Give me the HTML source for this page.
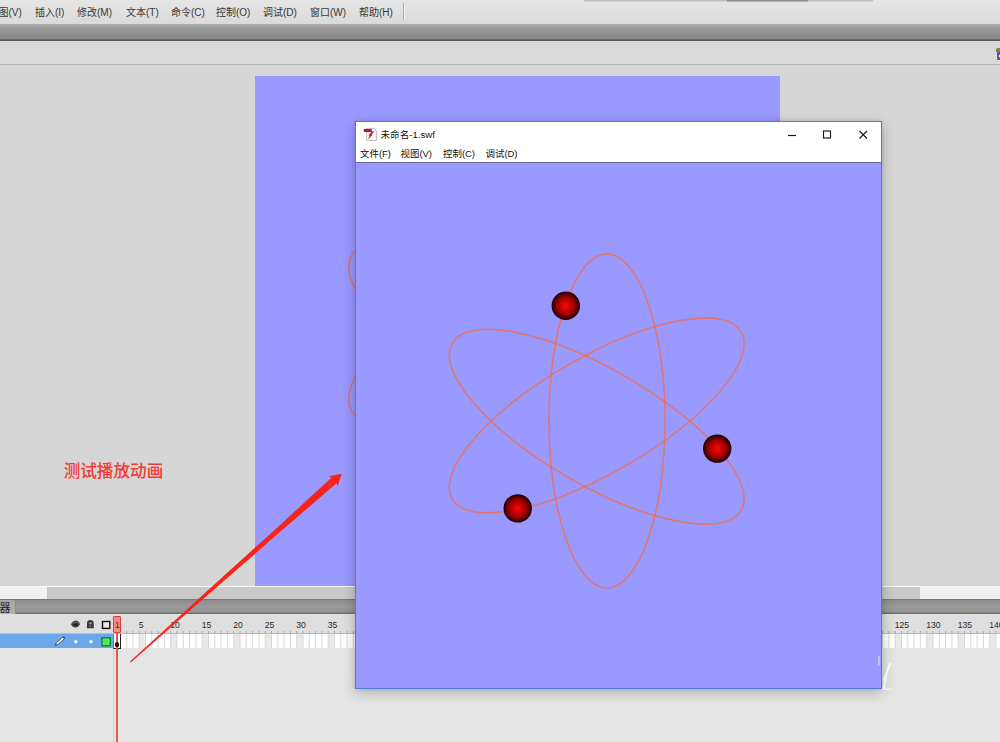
<!DOCTYPE html>
<html lang="zh"><head><meta charset="utf-8"><title>Flash</title>
<style>
html,body{margin:0;padding:0}
body{width:1000px;height:742px;position:relative;overflow:hidden;background:#d6d6d6;font-family:"Liberation Sans","Noto Sans CJK SC",sans-serif;color:#222}
div,span,svg{position:absolute;box-sizing:border-box}
#menubar{left:0;top:0;width:1000px;height:24px;background:linear-gradient(#e6e6e6,#dadada)}
#menubar span{top:6px;font-size:10px;line-height:14px;white-space:nowrap;color:#363636}
#darkbar{left:0;top:24px;width:1000px;height:17px;background:linear-gradient(#b0b0b0 0,#9a9a9a 25%,#8e8e8e 60%,#888888 86%,#5e5e5e 94%,#555555);}
#toolbar{left:0;top:41px;width:1000px;height:24px;background:#dadada;border-bottom:1px solid #b6b6b6}
#work{left:0;top:65px;width:1000px;height:522px;background:#d6d6d6}
#stage{left:255px;top:76px;width:525px;height:511px;background:#9999ff;overflow:hidden}
#hscroll{left:0;top:586px;width:1000px;height:13px;background:#f0f0f0;border-top:1px solid #f6f6f6}
#hthumb{left:47px;top:0;width:873px;height:11.5px;background:#c9c9c9}
#tlbar{left:0;top:599px;width:1000px;height:15px;background:linear-gradient(#6c6c6c 0,#8e8e8e 10%,#9b9b9b 50%,#929292 86%,#707070 96%,#6c6c6c);}
#tltab{left:0;top:1px;width:16px;height:14px;background:linear-gradient(#a4a4a4,#b4b4b4);border-right:1px solid #8a8a8a;font-size:10px;line-height:14px;overflow:hidden;color:#222}
#tlhead{left:0;top:614px;width:1000px;height:20px;background:#dedede;border-bottom:1px solid #bdbdbd}
#tlhead .num span{top:5.5px;font-size:8.6px;line-height:11px;color:#2a2a2a}
#ticks{left:120.3px;top:17px;width:880px;height:2px;background:repeating-linear-gradient(90deg,#9a9a9a 0,#9a9a9a 0.9px,transparent 0.9px,transparent 6.3px)}
#layer{left:0;top:634px;width:113.5px;height:14px;background:#6aa8ea}
#frames{left:114px;top:634px;width:886px;height:14.5px;background:
 repeating-linear-gradient(90deg,#ffffff 0,#ffffff 25.2px,#e9e9e9 25.2px,#e9e9e9 31.5px);border-bottom:1px solid #d0d0d0}
#below{left:0;top:648px;width:1000px;height:94px;background:#e5e5e5}
#vline{left:113px;top:648px;width:1px;height:94px;background:#cfcfcf}
#ph{left:113.3px;top:616.4px;width:7.6px;height:16.2px;background:#f28c8c;border:1px solid #e03c3c;border-radius:1px}
#phline{left:115.7px;top:633px;width:2.6px;height:109px;background:#f2a4a4;border-left:0.8px solid #de5656;border-right:0.8px solid #de5656}
#kf{left:113.3px;top:634px;width:7.5px;height:15px;border:1px solid #222;border-top:0;border-left-color:#777;background:#fff}
#win{left:355px;top:121px;width:527px;height:568px;background:#9999ff;border:1px solid #4f7cd4;box-shadow:0 4px 13px 0 rgba(0,0,0,.24),0 0 3px rgba(0,0,0,.10)}
#wtitle{left:0;top:0;width:525px;height:22px;background:#fff}
#wmenu{left:0;top:22px;width:525px;height:19px;background:#fff;border-bottom:1px solid #6c6ca8}
#wmenu span{top:3.1px;font-size:9.45px;line-height:14px;color:#111;white-space:nowrap}
#wtitle .t{left:24.5px;top:5.9px;font-size:9.6px;line-height:14px;color:#111;white-space:nowrap}
#red{left:63.7px;top:460.8px;font-size:16.6px;line-height:22px;color:#f23a34;white-space:nowrap;font-weight:500}
</style></head><body>
<div id="menubar">
<span style="left:-1.5px">图(V)</span><span style="left:35px">插入(I)</span><span style="left:77px">修改(M)</span><span style="left:126px">文本(T)</span><span style="left:171px">命令(C)</span><span style="left:216px">控制(O)</span><span style="left:263px">调试(D)</span><span style="left:310px">窗口(W)</span><span style="left:359px">帮助(H)</span>
<div style="left:403px;top:3px;width:1px;height:17px;background:#a8a8a8"></div><div style="left:404px;top:3px;width:1px;height:17px;background:#f2f2f2"></div>
</div>
<div style="left:584px;top:0;width:289px;height:2px;background:linear-gradient(rgba(164,164,164,.8),rgba(190,190,190,.2))"></div>
<div style="left:727px;top:0;width:81px;height:2px;background:linear-gradient(rgba(110,110,110,.8),rgba(150,150,150,.3))"></div>
<div id="darkbar"></div>
<div id="toolbar"></div>
<div id="work"></div>
<div style="left:996.4px;top:48.4px;width:4px;height:4px;background:#7c8a34;border-radius:2px 0 0 0"></div>
<div style="left:996.8px;top:52px;width:4px;height:7.6px;background:#5c5ca4"></div>
<div style="left:999px;top:54.5px;width:1px;height:2px;background:#f0f0ff"></div>

<div id="stage">
<svg width="525" height="511" viewBox="255 76 525 511" style="left:0;top:0">
<g transform="translate(-100.5 -88)" fill="none" stroke="#fa6840" stroke-opacity="0.76" stroke-width="1.5">
<ellipse cx="607" cy="421" rx="58" ry="167"/>
<ellipse cx="596.7" cy="426.8" rx="167" ry="58" transform="rotate(30 596.7 426.8)"/>
<ellipse cx="596.7" cy="415.4" rx="167" ry="58" transform="rotate(-30 596.7 415.4)"/>
</g></svg>
</div>
<div id="red">测试播放动画</div>
<div id="hscroll"><div id="hthumb"></div></div>
<div id="tlbar"><div id="tltab"><span style="left:-0.5px;top:0.9px;font-size:11px">器</span></div></div>
<div id="tlhead"><div class="num" style="left:0;top:0"><span style="left:138.7px">5</span><span style="left:170.2px">10</span><span style="left:201.7px">15</span><span style="left:233.2px">20</span><span style="left:264.7px">25</span><span style="left:296.2px">30</span><span style="left:327.7px">35</span><span style="left:359.2px">40</span><span style="left:390.7px">45</span><span style="left:422.2px">50</span><span style="left:453.7px">55</span><span style="left:485.2px">60</span><span style="left:516.7px">65</span><span style="left:548.2px">70</span><span style="left:579.7px">75</span><span style="left:611.2px">80</span><span style="left:642.7px">85</span><span style="left:674.2px">90</span><span style="left:705.7px">95</span><span style="left:737.2px">100</span><span style="left:768.7px">105</span><span style="left:800.2px">110</span><span style="left:831.7px">115</span><span style="left:863.2px">120</span><span style="left:894.7px">125</span><span style="left:926.2px">130</span><span style="left:957.7px">135</span><span style="left:989.2px">140</span></div><svg width="1000" height="36" viewBox="0 614 1000 36" style="left:0;top:0"><path d="M120.3 631v2.6M126.6 631v2.6M132.9 631v2.6M139.2 631v2.6M145.5 631v2.6M151.8 631v2.6M158.1 631v2.6M164.4 631v2.6M170.7 631v2.6M177.0 631v2.6M183.3 631v2.6M189.6 631v2.6M195.9 631v2.6M202.2 631v2.6M208.5 631v2.6M214.8 631v2.6M221.1 631v2.6M227.4 631v2.6M233.7 631v2.6M240.0 631v2.6M246.3 631v2.6M252.6 631v2.6M258.9 631v2.6M265.2 631v2.6M271.5 631v2.6M277.8 631v2.6M284.1 631v2.6M290.4 631v2.6M296.7 631v2.6M303.0 631v2.6M309.3 631v2.6M315.6 631v2.6M321.9 631v2.6M328.2 631v2.6M334.5 631v2.6M340.8 631v2.6M347.1 631v2.6M353.4 631v2.6M359.7 631v2.6M366.0 631v2.6M372.3 631v2.6M378.6 631v2.6M384.9 631v2.6M391.2 631v2.6M397.5 631v2.6M403.8 631v2.6M410.1 631v2.6M416.4 631v2.6M422.7 631v2.6M429.0 631v2.6M435.3 631v2.6M441.6 631v2.6M447.9 631v2.6M454.2 631v2.6M460.5 631v2.6M466.8 631v2.6M473.1 631v2.6M479.4 631v2.6M485.7 631v2.6M492.0 631v2.6M498.3 631v2.6M504.6 631v2.6M510.9 631v2.6M517.2 631v2.6M523.5 631v2.6M529.8 631v2.6M536.1 631v2.6M542.4 631v2.6M548.7 631v2.6M555.0 631v2.6M561.3 631v2.6M567.6 631v2.6M573.9 631v2.6M580.2 631v2.6M586.5 631v2.6M592.8 631v2.6M599.1 631v2.6M605.4 631v2.6M611.7 631v2.6M618.0 631v2.6M624.3 631v2.6M630.6 631v2.6M636.9 631v2.6M643.2 631v2.6M649.5 631v2.6M655.8 631v2.6M662.1 631v2.6M668.4 631v2.6M674.7 631v2.6M681.0 631v2.6M687.3 631v2.6M693.6 631v2.6M699.9 631v2.6M706.2 631v2.6M712.5 631v2.6M718.8 631v2.6M725.1 631v2.6M731.4 631v2.6M737.7 631v2.6M744.0 631v2.6M750.3 631v2.6M756.6 631v2.6M762.9 631v2.6M769.2 631v2.6M775.5 631v2.6M781.8 631v2.6M788.1 631v2.6M794.4 631v2.6M800.7 631v2.6M807.0 631v2.6M813.3 631v2.6M819.6 631v2.6M825.9 631v2.6M832.2 631v2.6M838.5 631v2.6M844.8 631v2.6M851.1 631v2.6M857.4 631v2.6M863.7 631v2.6M870.0 631v2.6M876.3 631v2.6M882.6 631v2.6M888.9 631v2.6M895.2 631v2.6M901.5 631v2.6M907.8 631v2.6M914.1 631v2.6M920.4 631v2.6M926.7 631v2.6M933.0 631v2.6M939.3 631v2.6M945.6 631v2.6M951.9 631v2.6M958.2 631v2.6M964.5 631v2.6M970.8 631v2.6M977.1 631v2.6M983.4 631v2.6M989.7 631v2.6M996.0 631v2.6M1002.3 631v2.6" stroke="#9c9c9c" stroke-width="0.9" fill="none"/></svg>
<svg width="50" height="20" viewBox="65 614 50 20" style="left:65px;top:0">
<!-- eye -->
<path d="M71 624.4 Q72.5 621 75.6 620.6 Q78.6 620.8 80 624 Q78.6 627.3 75.4 627.5 Q72.4 627.2 71 624.4Z" fill="#3a3a3a"/><path d="M72.6 623.2 Q75.5 621.3 78.6 623.2" stroke="#8a8a8a" stroke-width="0.7" fill="none"/><circle cx="75.6" cy="624.6" r="1.1" fill="#111"/>
<!-- lock -->
<path d="M86.9 628.3v-4.6a3.45 3.6 0 0 1 6.9 0v4.6z" fill="#3a3a3a"/><path d="M88.9 624.2v-0.6a1.45 1.5 0 0 1 2.9 0v0.6z" fill="#8c8c8c"/><rect x="89.6" y="625.2" width="1.5" height="1.8" fill="#777"/>
<!-- box -->
<rect x="102.5" y="621.5" width="7.3" height="6.9" fill="#ece6ec" stroke="#111" stroke-width="1.4"/>
</svg>
</div>
<div id="layer">
<svg width="114" height="14" viewBox="0 634 114 14" style="left:0;top:0">
<path d="M55.2 645.2 L56.6 642.6 L62.6 637.2 L64.4 638.8 L58.2 644.4Z" fill="#fafafa" stroke="#2a3a55" stroke-width="0.8" stroke-linejoin="round"/><path d="M62.6 637.2 L63.6 636.4 L65 637.8 L64.4 638.8Z" fill="#333"/>
<circle cx="75.9" cy="641.8" r="1.7" fill="#f4fbff"/><circle cx="90.9" cy="641.8" r="1.7" fill="#f4fbff"/>
<rect x="101.9" y="637.8" width="8.4" height="8" fill="#52ea52" stroke="#147a30" stroke-width="1.3"/>
</svg></div>
<div id="frames"></div><svg width="1000" height="16" viewBox="0 634 1000 16" style="left:0;top:634px"><path d="M120.3 634.5v13.5M126.6 634.5v13.5M132.9 634.5v13.5M139.2 634.5v13.5M145.5 634.5v13.5M151.8 634.5v13.5M158.1 634.5v13.5M164.4 634.5v13.5M170.7 634.5v13.5M177.0 634.5v13.5M183.3 634.5v13.5M189.6 634.5v13.5M195.9 634.5v13.5M202.2 634.5v13.5M208.5 634.5v13.5M214.8 634.5v13.5M221.1 634.5v13.5M227.4 634.5v13.5M233.7 634.5v13.5M240.0 634.5v13.5M246.3 634.5v13.5M252.6 634.5v13.5M258.9 634.5v13.5M265.2 634.5v13.5M271.5 634.5v13.5M277.8 634.5v13.5M284.1 634.5v13.5M290.4 634.5v13.5M296.7 634.5v13.5M303.0 634.5v13.5M309.3 634.5v13.5M315.6 634.5v13.5M321.9 634.5v13.5M328.2 634.5v13.5M334.5 634.5v13.5M340.8 634.5v13.5M347.1 634.5v13.5M353.4 634.5v13.5M359.7 634.5v13.5M366.0 634.5v13.5M372.3 634.5v13.5M378.6 634.5v13.5M384.9 634.5v13.5M391.2 634.5v13.5M397.5 634.5v13.5M403.8 634.5v13.5M410.1 634.5v13.5M416.4 634.5v13.5M422.7 634.5v13.5M429.0 634.5v13.5M435.3 634.5v13.5M441.6 634.5v13.5M447.9 634.5v13.5M454.2 634.5v13.5M460.5 634.5v13.5M466.8 634.5v13.5M473.1 634.5v13.5M479.4 634.5v13.5M485.7 634.5v13.5M492.0 634.5v13.5M498.3 634.5v13.5M504.6 634.5v13.5M510.9 634.5v13.5M517.2 634.5v13.5M523.5 634.5v13.5M529.8 634.5v13.5M536.1 634.5v13.5M542.4 634.5v13.5M548.7 634.5v13.5M555.0 634.5v13.5M561.3 634.5v13.5M567.6 634.5v13.5M573.9 634.5v13.5M580.2 634.5v13.5M586.5 634.5v13.5M592.8 634.5v13.5M599.1 634.5v13.5M605.4 634.5v13.5M611.7 634.5v13.5M618.0 634.5v13.5M624.3 634.5v13.5M630.6 634.5v13.5M636.9 634.5v13.5M643.2 634.5v13.5M649.5 634.5v13.5M655.8 634.5v13.5M662.1 634.5v13.5M668.4 634.5v13.5M674.7 634.5v13.5M681.0 634.5v13.5M687.3 634.5v13.5M693.6 634.5v13.5M699.9 634.5v13.5M706.2 634.5v13.5M712.5 634.5v13.5M718.8 634.5v13.5M725.1 634.5v13.5M731.4 634.5v13.5M737.7 634.5v13.5M744.0 634.5v13.5M750.3 634.5v13.5M756.6 634.5v13.5M762.9 634.5v13.5M769.2 634.5v13.5M775.5 634.5v13.5M781.8 634.5v13.5M788.1 634.5v13.5M794.4 634.5v13.5M800.7 634.5v13.5M807.0 634.5v13.5M813.3 634.5v13.5M819.6 634.5v13.5M825.9 634.5v13.5M832.2 634.5v13.5M838.5 634.5v13.5M844.8 634.5v13.5M851.1 634.5v13.5M857.4 634.5v13.5M863.7 634.5v13.5M870.0 634.5v13.5M876.3 634.5v13.5M882.6 634.5v13.5M888.9 634.5v13.5M895.2 634.5v13.5M901.5 634.5v13.5M907.8 634.5v13.5M914.1 634.5v13.5M920.4 634.5v13.5M926.7 634.5v13.5M933.0 634.5v13.5M939.3 634.5v13.5M945.6 634.5v13.5M951.9 634.5v13.5M958.2 634.5v13.5M964.5 634.5v13.5M970.8 634.5v13.5M977.1 634.5v13.5M983.4 634.5v13.5M989.7 634.5v13.5M996.0 634.5v13.5M1002.3 634.5v13.5" stroke="#d4d4d4" stroke-width="0.9" fill="none"/></svg>
<div id="below"></div><div id="vline"></div>
<div id="kf"></div>
<div id="ph"><span style="left:0.6px;top:2.6px;font-size:8.6px;line-height:11px;color:#7a1616">1</span></div>
<div id="phline"></div><div style="left:114.9px;top:642.3px;width:4.3px;height:4.3px;border-radius:50%;background:#1a0505"></div>
<svg width="1000" height="742" viewBox="0 0 1000 742" style="left:0;top:0">
<polygon points="130.0,661.4 157.4,636.5 185.6,610.8 198.9,598.6 233.6,566.9 268.5,535.4 288.5,517.2 307.6,499.6 331.6,477.7 328.9,476.2 341.8,473.8 337.7,486.0 336.5,483.2 311.9,504.4 292.2,521.4 271.8,539.1 236.4,570.0 200.9,600.9 187.3,612.8 158.7,637.9 130.8,662.4" fill="#f8241a"/>
</svg>
<div id="win">
<div id="wtitle">
<svg width="16" height="16" viewBox="0 0 16 16" style="left:7px;top:5px">
<path d="M3.6 1.4h7.4l2.7 2.7v9.3h-10.1z" fill="#f6f8f8" stroke="#a9b0b4" stroke-width="0.8"/>
<path d="M0.8 2h7.9v3h-7.9z" fill="#c8102a"/>
<path d="M10.9 4.4 L8.2 7.6 L9.3 7.7 L5.7 11.6 L7 8.6 L6 8.5 L8.6 4.9Z" fill="#c41432" stroke="#c41432" stroke-width="0.5"/>
</svg>
<span class="t">未命名-1.swf</span>
<svg width="110" height="21" viewBox="0 0 110 21" style="left:414.5px;top:0.5px" fill="none" stroke="#1c1c1c" stroke-width="1.15">
<path d="M17 12.5h8"/><rect x="52.5" y="8" width="7" height="7"/><path d="M88.5 8l7.5 7.5M96 8l-7.5 7.5"/>
</svg>
</div>
<div id="wmenu"><span style="left:4px">文件(F)</span><span style="left:44.5px">视图(V)</span><span style="left:87px">控制(C)</span><span style="left:129.5px">调试(D)</span></div>
<svg width="525" height="525" viewBox="356 163 525 525" style="left:0;top:41px">
<defs><radialGradient id="b"><stop offset="0" stop-color="#f60a0c"/><stop offset="0.35" stop-color="#cc0000"/><stop offset="0.68" stop-color="#8c0000"/><stop offset="0.88" stop-color="#440002"/><stop offset="1" stop-color="#160006"/></radialGradient></defs>
<g fill="none" stroke="#fa6840" stroke-opacity="0.76" stroke-width="1.5">
<ellipse cx="607" cy="421" rx="58" ry="167"/>
<ellipse cx="596.7" cy="426.8" rx="167" ry="58" transform="rotate(30 596.7 426.8)"/>
<ellipse cx="596.7" cy="415.4" rx="167" ry="58" transform="rotate(-30 596.7 415.4)"/>
</g>
<circle cx="565.8" cy="305.8" r="14.2" fill="url(#b)"/>
<circle cx="717.2" cy="448.6" r="14.2" fill="url(#b)"/>
<circle cx="517.7" cy="508.4" r="14.2" fill="url(#b)"/>
</svg>
</div>
<svg width="30" height="50" viewBox="870 650 30 50" style="left:870px;top:650px" fill="none" stroke-linecap="round">
<path d="M878.9 656.5V665" stroke="#d4dcff" stroke-width="1.6" opacity=".8"/>
<path d="M890 663.5L884.2 680" stroke="#f6f6f6" stroke-width="2.2"/>
<path d="M886.4 676L883.8 688.5" stroke="#f3f3f3" stroke-width="2"/>
<path d="M884 689.3h6" stroke="#f1f1f1" stroke-width="1.6"/>
</svg>
</body></html>
